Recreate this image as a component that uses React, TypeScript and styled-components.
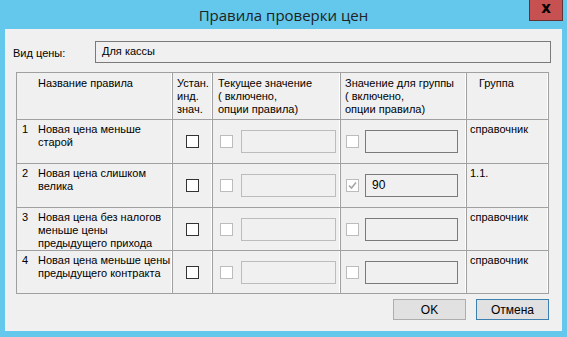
import React from 'react'
import styled, { createGlobalStyle } from 'styled-components'

const GlobalStyle = createGlobalStyle`
  html, body {
    margin: 0;
    padding: 0;
    background: #63c8eb;
  }
  * {
    box-sizing: border-box;
  }
`

const Frame = styled.div`
  position: relative;
  width: 567px;
  height: 337px;
  background: #63c8eb;
  padding: 0 5px 6px 5px;
  display: flex;
  flex-direction: column;
  font-family: 'Liberation Sans', Tahoma, sans-serif;
  font-size: 11px;
  color: #000;
`
const TitleBar = styled.div`
  height: 29px;
  display: flex;
  align-items: center;
  justify-content: center;
  padding-top: 1px;
  font-family: 'Open Sans', 'Liberation Sans', sans-serif;
  font-size: 15px;
  color: #222;
`
const CloseBtn = styled.div`
  position: absolute;
  top: 0;
  right: 4px;
  width: 34px;
  height: 21px;
  background: #c75050;
  border: 1px solid #5e3434;
  border-top: none;
  display: flex;
  align-items: center;
  justify-content: center;
  color: #000;
  font-family: 'DejaVu Sans', sans-serif;
  font-weight: bold;
  font-size: 15px;
  line-height: 1;
  padding-bottom: 3px;
`
const Client = styled.div`
  flex: 1;
  background: #f0f0f0;
  display: flex;
  flex-direction: column;
  padding: 12px 12px 0 11px;
`
const FieldRow = styled.div`
  display: flex;
  align-items: center;
  height: 22px;
`
const FieldLabel = styled.span`
  width: 82px;
  margin-left: -3px;
  margin-top: 2px;
`
const FieldBox = styled.div`
  flex: 1;
  height: 22px;
  border: 1px solid #7a7a7a;
  background: #f0f0f0;
  padding: 3px 6px;
  margin-right: -1px;
`
const Table = styled.div`
  margin-top: 9px;
  width: 533px;
  display: grid;
  grid-template-columns: 156px 40px 128px 126px 82px;
  grid-template-rows: 47px 44px 44px 43px 43px;
  border-left: 1px solid #a0a0a0;
  border-top: 1px solid #a0a0a0;
`
const Cell = styled.div<{ $pad?: string }>`
  border-right: 1px solid #a0a0a0;
  border-bottom: 1px solid #a0a0a0;
  padding: ${(p) => p.$pad || '0'};
  line-height: 13px;
  white-space: nowrap;
  box-shadow: inset -1px 0 0 #ffffff;
`
const HeadCell = styled(Cell)`
  padding-top: 4px;
`
const NameCell = styled(Cell)`
  display: flex;
  padding: 3px 0 0 5px;
`
const Num = styled.span`
  width: 16px;
  flex-shrink: 0;
`
const CenterCell = styled(Cell)`
  display: flex;
  align-items: center;
  justify-content: center;
`
const ValueCell = styled(Cell)<{ $gap: number; $left: number }>`
  display: flex;
  align-items: center;
  gap: ${(p) => p.$gap}px;
  padding-left: ${(p) => p.$left}px;
`
const Check = styled.div<{ $disabled?: boolean }>`
  width: 13px;
  height: 13px;
  flex-shrink: 0;
  background: #ffffff;
  border: 1px solid ${(p) => (p.$disabled ? '#bcbcbc' : '#333333')};
  display: flex;
  align-items: center;
  justify-content: center;
`
const Input = styled.div<{ $disabled?: boolean; $width: number }>`
  width: ${(p) => p.$width}px;
  height: 23px;
  border: 1px solid ${(p) => (p.$disabled ? '#bcbcbc' : '#7a7a7a')};
  background: #f0f0f0;
  padding: 4px 6px;
  line-height: 13px;
  font-size: 12px;
`
const Footer = styled.div`
  display: flex;
  justify-content: flex-end;
  gap: 10px;
  margin-top: 5px;
  padding-right: 1px;
`
const Button = styled.div<{ $focused?: boolean }>`
  width: 73px;
  height: 21px;
  background: #e1e1e1;
  border: 1px solid ${(p) => (p.$focused ? '#3c7fb1' : '#adadad')};
  display: flex;
  align-items: center;
  justify-content: center;
  font-size: 12px;
`

type Rule = {
  num: number
  name: string[]
  value: string
  checked: boolean
  group: string
}

const rules: Rule[] = [
  { num: 1, name: ['Новая цена меньше', 'старой'], value: '', checked: false, group: 'справочник' },
  { num: 2, name: ['Новая цена слишком', 'велика'], value: '90', checked: true, group: '1.1.' },
  {
    num: 3,
    name: ['Новая цена без налогов', 'меньше цены', 'предыдущего прихода'],
    value: '',
    checked: false,
    group: 'справочник',
  },
  {
    num: 4,
    name: ['Новая цена меньше цены', 'предыдущего контракта'],
    value: '',
    checked: false,
    group: 'справочник',
  },
]

function Tick() {
  return (
    <svg width='11' height='11' viewBox='0 0 11 11'>
      <path d='M2 5.5 L4.5 8 L9 2.5' fill='none' stroke='#a6a6a6' strokeWidth='1.6' />
    </svg>
  )
}

export default function App() {
  return (
    <Frame>
      <GlobalStyle />
      <TitleBar>Правила проверки цен</TitleBar>
      <CloseBtn>x</CloseBtn>
      <Client>
        <FieldRow>
          <FieldLabel>Вид цены:</FieldLabel>
          <FieldBox>Для кассы</FieldBox>
        </FieldRow>
        <Table>
          <HeadCell $pad='4px 4px 0 21px'>Название правила</HeadCell>
          <HeadCell $pad='4px 0 0 4px'>
            Устан.
            <br />
            инд.
            <br />
            знач.
          </HeadCell>
          <HeadCell $pad='4px 0 0 5px'>
            Текущее значение
            <br />( включено,
            <br />
            опции правила)
          </HeadCell>
          <HeadCell $pad='4px 0 0 4px'>
            Значение для группы
            <br />( включено,
            <br />
            опции правила)
          </HeadCell>
          <HeadCell $pad='4px 0 0 12px'>Группа</HeadCell>
          {rules.map((r) => (
            <React.Fragment key={r.num}>
              <NameCell>
                <Num>{r.num}</Num>
                <span>
                  {r.name.map((line, i) => (
                    <React.Fragment key={i}>
                      {i > 0 && <br />}
                      {line}
                    </React.Fragment>
                  ))}
                </span>
              </NameCell>
              <CenterCell>
                <Check />
              </CenterCell>
              <ValueCell $gap={8} $left={7}>
                <Check $disabled />
                <Input $disabled $width={95} />
              </ValueCell>
              <ValueCell $gap={6} $left={5}>
                <Check $disabled>{r.checked && <Tick />}</Check>
                <Input $width={93}>{r.value}</Input>
              </ValueCell>
              <Cell $pad='3px 0 0 3px'>{r.group}</Cell>
            </React.Fragment>
          ))}
        </Table>
        <Footer>
          <Button>OK</Button>
          <Button $focused>Отмена</Button>
        </Footer>
      </Client>
    </Frame>
  )
}
